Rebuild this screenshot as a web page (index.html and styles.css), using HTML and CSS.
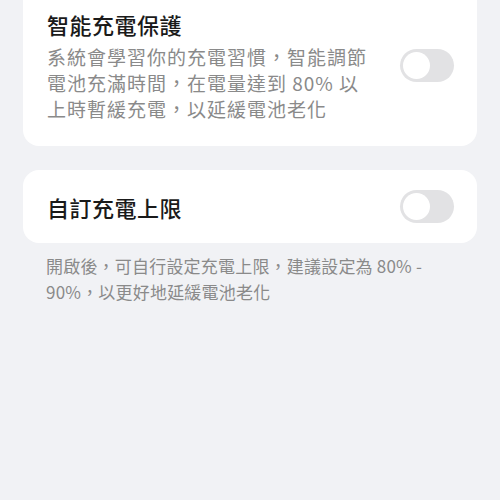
FILE: index.html
```html
<!DOCTYPE html>
<html lang="zh-Hant">

<head>
    <meta charset="UTF-8">
    <meta name="viewport" content="width=device-width, initial-scale=1.0">
    <title>電池設定</title>
    <link rel="stylesheet" href="styles.css">
</head>

<body>

    <div class="page">
        <!-- Smart charging -->
        <div class="card card-top">
            <div class="card-text">
                <h1 class="card-title">智能充電保護</h1>
                <p class="card-desc">系統會學習你的充電習慣，智能調節電池充滿時間，在電量達到 80% 以上時暫緩充電，以延緩電池老化</p>
            </div>
            <div class="switch"><span class="knob"></span></div>
        </div>

        <!-- Custom limit -->
        <div class="card card-row">
            <div class="card-text">
                <h1 class="card-title">自訂充電上限</h1>
            </div>
            <div class="switch"><span class="knob"></span></div>
        </div>
        <p class="note">開啟後，可自行設定充電上限，建議設定為 80% - 90%，以更好地延緩電池老化</p>
    </div>

</body>

</html>
```

FILE: styles.css
```css
* {
    margin: 0;
    padding: 0;
    box-sizing: border-box;
}

body {
    font-family: "Noto Sans CJK TC", "Noto Sans", sans-serif;
    background-color: #f1f2f5;
    color: #1a1a1a;
}

.page {
    padding: 0 23px;
    display: flex;
    flex-direction: column;
}

.card {
    background-color: #ffffff;
    border-radius: 16px;
    display: flex;
    align-items: center;
    justify-content: space-between;
    padding: 0 23px 0 24px;
}

.card-top {
    margin-top: -16px;
    padding-top: 25px;
    padding-bottom: 24px;
}

.card-row {
    margin-top: 24px;
    padding-top: 20px;
    padding-bottom: 20px;
}

.card-text {
    width: 330px;
}

.card-title {
    font-size: 22px;
    font-weight: 500;
    line-height: 30px;
    letter-spacing: 0.5px;
}

.card-desc {
    margin-top: 5px;
    font-size: 19px;
    line-height: 26px;
    letter-spacing: 1px;
    color: #8a8a8a;
}

.switch {
    width: 54px;
    height: 33px;
    border-radius: 17px;
    background-color: #e2e2e4;
    padding: 3px;
    flex-shrink: 0;
}

.knob {
    display: block;
    width: 27px;
    height: 27px;
    border-radius: 50%;
    background-color: #ffffff;
}

.note {
    margin-top: 10px;
    padding-left: 23px;
    padding-right: 40px;
    font-size: 17px;
    line-height: 26px;
    letter-spacing: 0.2px;
    color: #8a8a8a;
}
```
